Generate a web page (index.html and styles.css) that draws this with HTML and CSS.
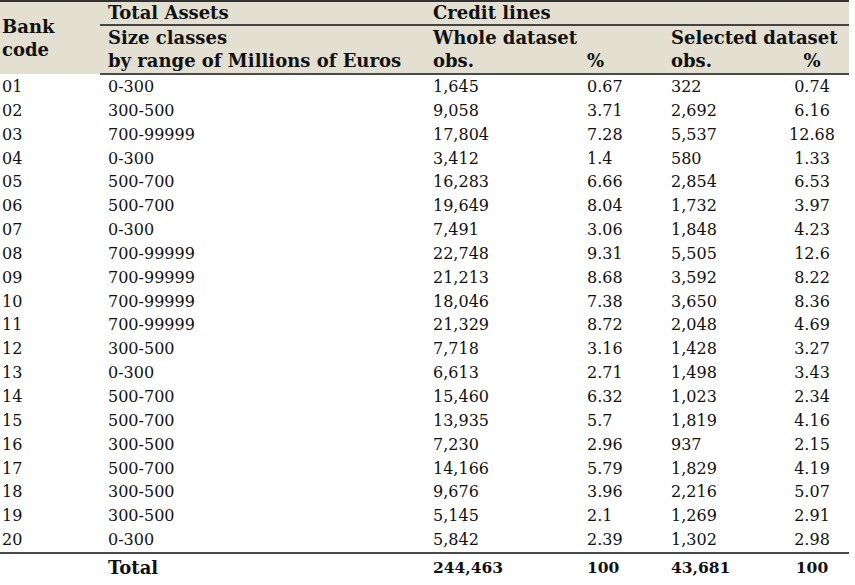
FILE: index.html
```html
<!DOCTYPE html>
<html>
<head>
<meta charset="utf-8">
<link rel="stylesheet" href="styles.css">
</head>
<body>
<table class="tbl">
  <colgroup>
    <col class="c1"><col class="c2"><col class="c3"><col class="c4"><col class="c5"><col class="c6">
  </colgroup>
  <thead>
    <tr class="h1">
      <th rowspan="3" class="bank">Bank<br>code</th>
      <th class="ul">Total Assets</th>
      <th colspan="4" class="ul">Credit lines</th>
    </tr>
    <tr class="h2">
      <th>Size classes</th>
      <th colspan="2">Whole dataset</th>
      <th colspan="2">Selected dataset</th>
    </tr>
    <tr class="h3">
      <th>by range of Millions of Euros</th>
      <th>obs.</th>
      <th>%</th>
      <th>obs.</th>
      <th class="ctr">%</th>
    </tr>
  </thead>
  <tbody>
    <tr><td>01</td><td>0-300</td><td>1,645</td><td>0.67</td><td>322</td><td class="ctr">0.74</td></tr>
    <tr><td>02</td><td>300-500</td><td>9,058</td><td>3.71</td><td>2,692</td><td class="ctr">6.16</td></tr>
    <tr><td>03</td><td>700-99999</td><td>17,804</td><td>7.28</td><td>5,537</td><td class="ctr">12.68</td></tr>
    <tr><td>04</td><td>0-300</td><td>3,412</td><td>1.4</td><td>580</td><td class="ctr">1.33</td></tr>
    <tr><td>05</td><td>500-700</td><td>16,283</td><td>6.66</td><td>2,854</td><td class="ctr">6.53</td></tr>
    <tr><td>06</td><td>500-700</td><td>19,649</td><td>8.04</td><td>1,732</td><td class="ctr">3.97</td></tr>
    <tr><td>07</td><td>0-300</td><td>7,491</td><td>3.06</td><td>1,848</td><td class="ctr">4.23</td></tr>
    <tr><td>08</td><td>700-99999</td><td>22,748</td><td>9.31</td><td>5,505</td><td class="ctr">12.6</td></tr>
    <tr><td>09</td><td>700-99999</td><td>21,213</td><td>8.68</td><td>3,592</td><td class="ctr">8.22</td></tr>
    <tr><td>10</td><td>700-99999</td><td>18,046</td><td>7.38</td><td>3,650</td><td class="ctr">8.36</td></tr>
    <tr><td>11</td><td>700-99999</td><td>21,329</td><td>8.72</td><td>2,048</td><td class="ctr">4.69</td></tr>
    <tr><td>12</td><td>300-500</td><td>7,718</td><td>3.16</td><td>1,428</td><td class="ctr">3.27</td></tr>
    <tr><td>13</td><td>0-300</td><td>6,613</td><td>2.71</td><td>1,498</td><td class="ctr">3.43</td></tr>
    <tr><td>14</td><td>500-700</td><td>15,460</td><td>6.32</td><td>1,023</td><td class="ctr">2.34</td></tr>
    <tr><td>15</td><td>500-700</td><td>13,935</td><td>5.7</td><td>1,819</td><td class="ctr">4.16</td></tr>
    <tr><td>16</td><td>300-500</td><td>7,230</td><td>2.96</td><td>937</td><td class="ctr">2.15</td></tr>
    <tr><td>17</td><td>500-700</td><td>14,166</td><td>5.79</td><td>1,829</td><td class="ctr">4.19</td></tr>
    <tr><td>18</td><td>300-500</td><td>9,676</td><td>3.96</td><td>2,216</td><td class="ctr">5.07</td></tr>
    <tr><td>19</td><td>300-500</td><td>5,145</td><td>2.1</td><td>1,269</td><td class="ctr">2.91</td></tr>
    <tr class="last"><td>20</td><td>0-300</td><td>5,842</td><td>2.39</td><td>1,302</td><td class="ctr">2.98</td></tr>
  </tbody>
  <tfoot>
    <tr class="total"><td></td><td class="lbl">Total</td><td>244,463</td><td>100</td><td>43,681</td><td class="ctr">100</td></tr>
  </tfoot>
</table>
</body>
</html>
```
FILE: styles.css
```css
html, body {
  margin: 0;
  padding: 0;
  background: #ffffff;
}
.tbl {
  border-collapse: collapse;
  table-layout: fixed;
  width: 849px;
  font-family: "DejaVu Serif", serif;
  font-size: 16px;
  color: #111;
  border-top: 2px solid #333;
}
.c1 { width: 100px; }
.c2 { width: 325px; }
.c3 { width: 154px; }
.c4 { width: 84px; }
.c5 { width: 112px; }
.c6 { width: 74px; }
thead tr {
  background: #e3e0d1;
}
th {
  font-weight: bold;
  font-size: 18px;
  text-align: left;
  padding: 0 0 0 8px;
  line-height: 23px;
  white-space: nowrap;
}
th.bank {
  padding-left: 2px;
  vertical-align: middle;
}
th.ul {
  border-bottom: 2px solid #444;
  line-height: 22px;
}
.h3 th {
  border-bottom: 2px solid #4a4a4a;
  line-height: 24px;
}
td {
  padding: 1px 0 0 8px;
  line-height: 22.85px;
  white-space: nowrap;
}
td:first-child {
  padding-left: 2px;
}
.ctr, th.ctr {
  text-align: center;
  padding-left: 0;
}
.last td {
  border-bottom: 2px solid #4a4a4a;
}
.total td {
  font-weight: bold;
  font-size: 15.5px;
  line-height: 25px;
}
.total td.lbl {
  font-size: 18px;
}
```
